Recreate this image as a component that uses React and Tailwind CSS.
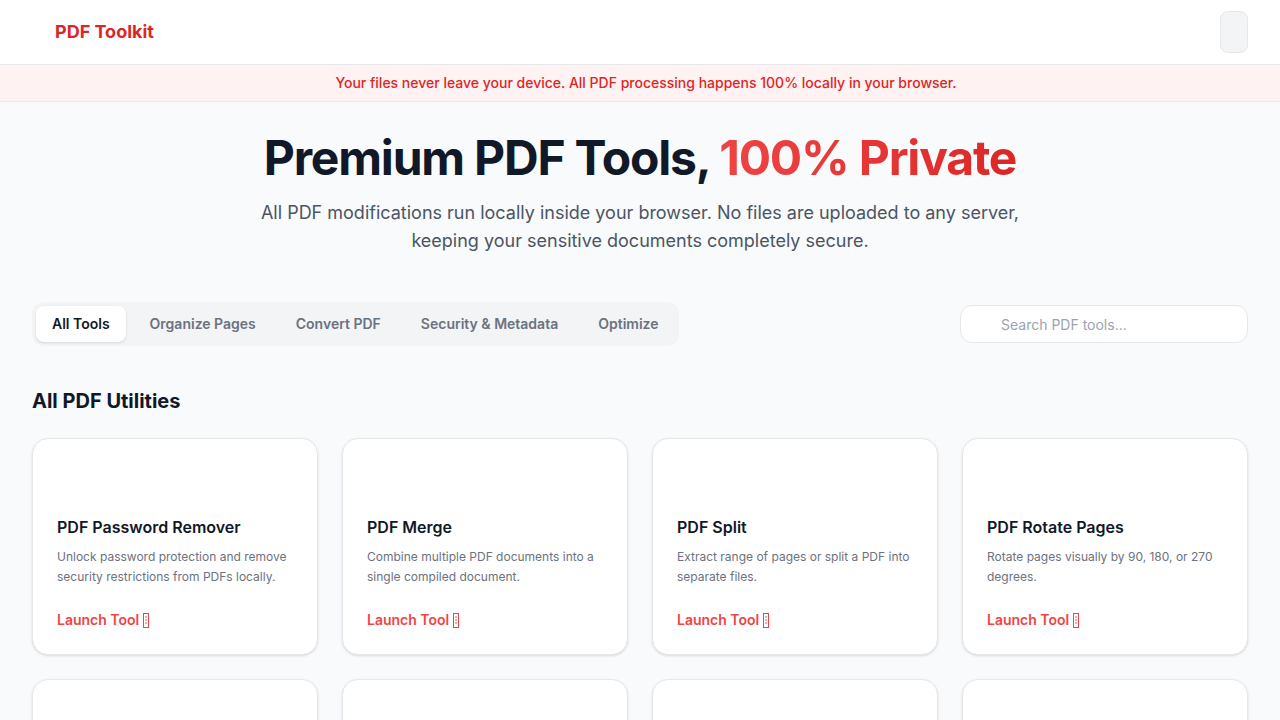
import React from "react";

const tabs = ["All Tools", "Organize Pages", "Convert PDF", "Security & Metadata", "Optimize"];

const tools = [
  { title: "PDF Password Remover", desc: "Unlock password protection and remove security restrictions from PDFs locally." },
  { title: "PDF Merge", desc: "Combine multiple PDF documents into a single compiled document." },
  { title: "PDF Split", desc: "Extract range of pages or split a PDF into separate files." },
  { title: "PDF Rotate Pages", desc: "Rotate pages visually by 90, 180, or 270 degrees." },
  { title: "PDF Compress", desc: "Reduce the file size of your PDF while keeping good quality." },
  { title: "Images to PDF", desc: "Turn JPG and PNG images into a single PDF document." },
  { title: "PDF to Images", desc: "Export every page of a PDF as a high quality image." },
  { title: "Edit Metadata", desc: "Change the title, author and keywords stored in a PDF." },
];

// Missing-glyph box drawn after the link label
function GlyphBox() {
  return (
    <span className="ml-1 inline-flex h-[15px] w-[6px] flex-col items-center justify-center gap-[1px] border border-[#ef4444]">
      <span className="h-[2px] w-[2px] bg-[#fca5a5]" />
      <span className="h-[2px] w-[2px] bg-[#fca5a5]" />
      <span className="h-[2px] w-[2px] bg-[#fca5a5]" />
    </span>
  );
}

function ToolCard({ title, desc }) {
  return (
    <div className="flex flex-col rounded-2xl border border-[#e5e7eb] bg-white p-6 shadow-sm">
      <div className="h-[50px]" />
      <h3 className="text-base leading-7 font-semibold text-[#111827]">{title}</h3>
      <p className="mt-1.5 text-xs leading-5 text-[#6b7280]">{desc}</p>
      <div className="mt-[23px] flex items-center text-sm leading-5 font-semibold text-[#ef4444]">
        Launch Tool
        <GlyphBox />
      </div>
    </div>
  );
}

export default function App() {
  return (
    <div className="min-h-screen bg-[#f9fafb] font-['Inter',sans-serif] text-[#111827]">
      <header className="flex h-[65px] items-center justify-between border-b border-[#e5e7eb] bg-white pl-[55px] pr-8">
        <div className="text-lg font-bold text-[#dc2626]">PDF Toolkit</div>
        <button className="h-[42px] w-[28px] rounded-lg border border-[#e5e7eb] bg-[#f3f4f6]" />
      </header>

      <div className="border-b border-[#fee2e2] bg-[#fef2f2] py-2 pl-3 text-center text-sm leading-5 font-medium text-[#dc2626]">
        Your files never leave your device. All PDF processing happens 100% locally in your browser.
      </div>

      <main className="px-8">
        <section className="pt-8 text-center">
          <h1 className="text-5xl leading-none font-bold tracking-tight text-[#111827]">
            Premium PDF Tools,{" "}
            <span className="bg-linear-to-r from-[#ef4444] to-[#dc2626] bg-clip-text text-transparent">100% Private</span>
          </h1>
          <p className="mx-auto mt-[17px] max-w-3xl text-lg leading-7 text-[#4b5563]">
            All PDF modifications run locally inside your browser. No files are uploaded to any server, keeping your sensitive documents completely secure.
          </p>
        </section>

        <div className="mt-[47px] flex items-center justify-between">
          <div className="flex gap-2 rounded-xl bg-[#f3f4f6] p-1">
            {tabs.map((t, i) => (
              <button
                key={t}
                className={
                  i === 0
                    ? "rounded-lg bg-white px-4 py-2 text-sm leading-5 font-semibold text-[#111827] shadow-sm"
                    : "rounded-lg px-4 py-2 text-sm leading-5 font-semibold text-[#6b7280]"
                }
              >
                {t}
              </button>
            ))}
          </div>
          <div className="relative w-72">
            <input
              type="text"
              placeholder="Search PDF tools..."
              className="h-[38px] w-full rounded-xl border border-[#e5e7eb] bg-white pl-10 pr-4 text-sm text-[#111827] outline-none placeholder:text-[#9ca3af]"
            />
          </div>
        </div>

        <h2 className="mt-[41px] text-xl leading-7 font-bold text-[#111827]">All PDF Utilities</h2>

        <div className="mt-[23px] grid grid-cols-4 gap-6 pb-10">
          {tools.map((t) => (
            <ToolCard key={t.title} {...t} />
          ))}
        </div>
      </main>
    </div>
  );
}
